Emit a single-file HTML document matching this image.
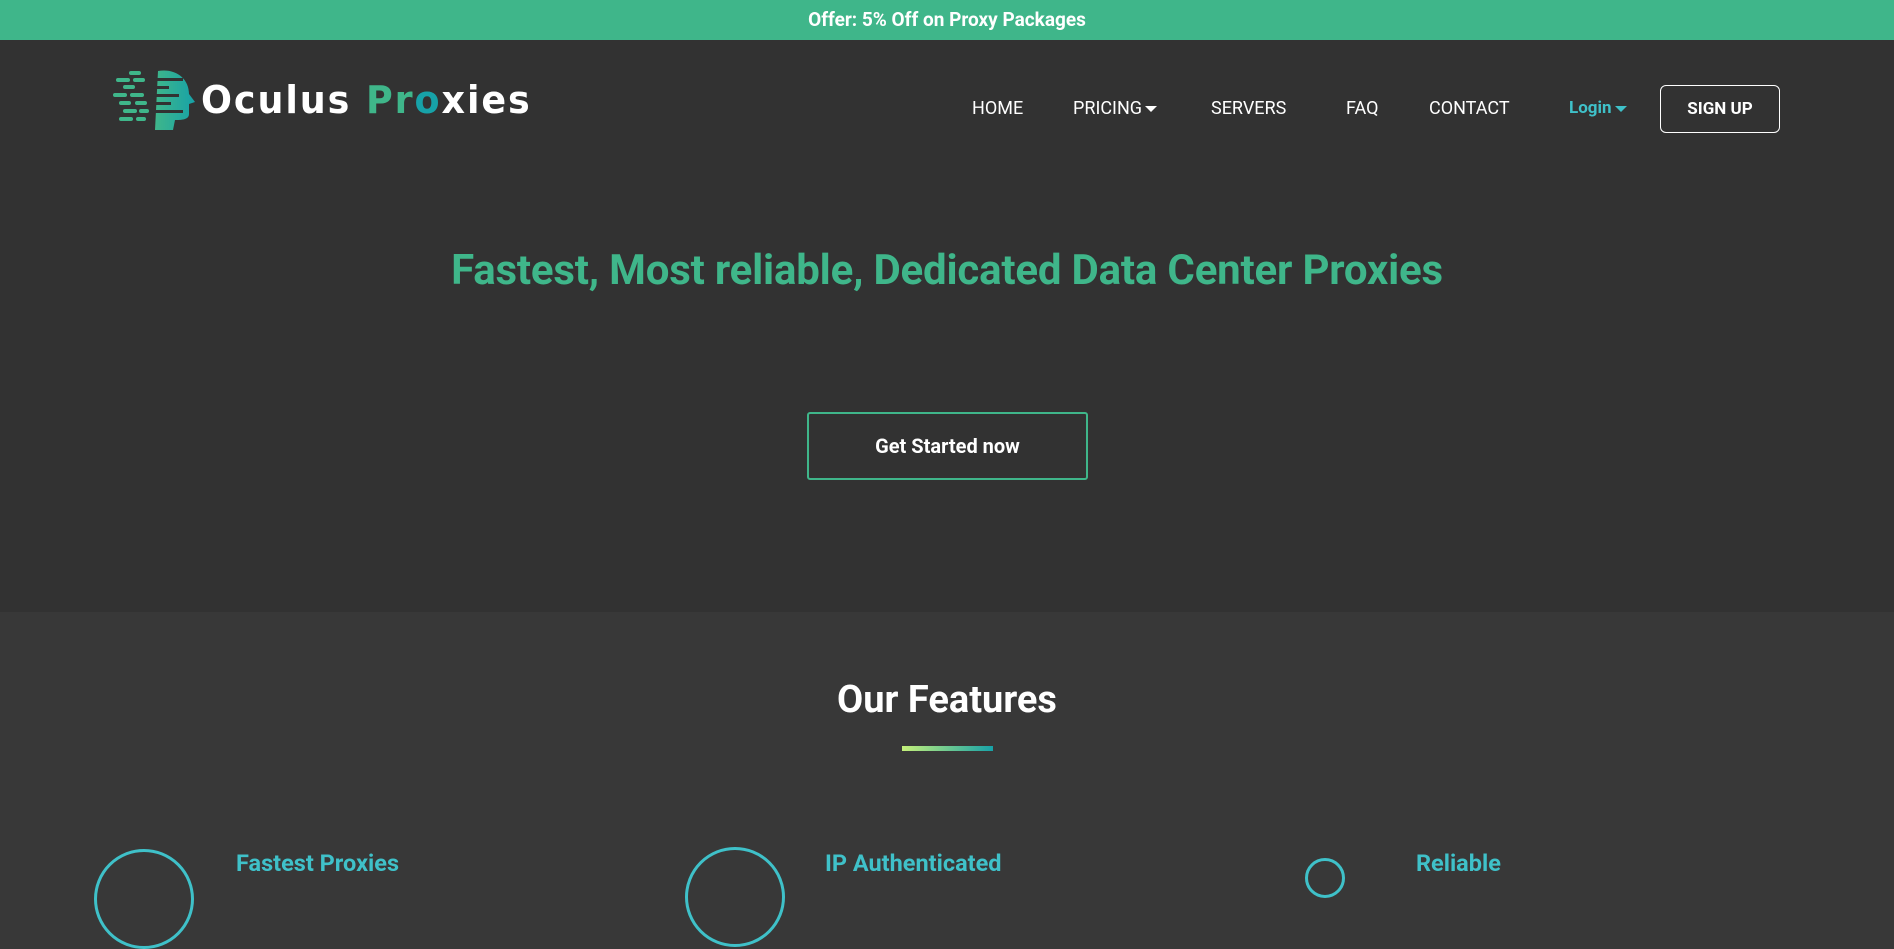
<!DOCTYPE html>
<html><head><meta charset="utf-8"><style>
*{margin:0;padding:0;box-sizing:border-box}
body{width:1894px;height:863px;overflow:hidden;background:#383838;font-family:Roboto,"Liberation Sans",sans-serif;position:relative}
.top{position:absolute;left:0;top:0;width:1894px;height:40px;background:#3fb68a;color:#fff;font-weight:bold;font-size:19px;text-align:center;line-height:40px}
.hero{position:absolute;left:0;top:40px;width:1894px;height:572px;background:#323232}
.a{position:absolute;font-size:18px;color:#fff}
.caret{display:inline-block;border-left:6px solid transparent;border-right:6px solid transparent;border-top:6px solid currentColor;vertical-align:middle;margin-left:3px}
.ab{position:absolute}
</style></head><body>
<div class="top">Offer: 5% Off on Proxy Packages</div>
<div class="hero"></div>
<svg class="ab" style="left:113px;top:68px" width="85" height="64" viewBox="0 0 85 64">
<defs><linearGradient id="g" x1="0" x2="1"><stop offset="0" stop-color="#3fb68a"/><stop offset="1" stop-color="#17a2a8"/></linearGradient></defs>
<path d="M45 3 C62 0 76 10 76 26 L82 34 L76 36 L76 46 C76 52 68 52 62 52 L60 62 L42 62 Z" fill="url(#g)"/>
<g fill="#3fb68a"><rect x="16" y="3" width="12" height="4" rx="2"/><rect x="3" y="10" width="14" height="4" rx="2"/><rect x="20" y="10" width="12" height="4" rx="2"/><rect x="10" y="17" width="12" height="4" rx="2"/><rect x="0" y="25" width="14" height="4" rx="2"/><rect x="17" y="25" width="14" height="4" rx="2"/><rect x="6" y="33" width="12" height="4" rx="2"/><rect x="22" y="33" width="12" height="4" rx="2"/><rect x="10" y="41" width="14" height="4" rx="2"/><rect x="26" y="41" width="10" height="4" rx="2"/><rect x="6" y="49" width="14" height="4" rx="2"/><rect x="23" y="49" width="10" height="4" rx="2"/></g>
<g fill="#323232"><rect x="36" y="10" width="34" height="3"/><rect x="36" y="18" width="20" height="3"/><rect x="36" y="26" width="30" height="3"/><rect x="36" y="34" width="22" height="3"/><rect x="36" y="42" width="34" height="3"/></g>
</svg>
<div class="ab" style="left:201px;top:78px;font-size:38px;color:#fff;letter-spacing:2px;font-family:'DejaVu Sans',sans-serif;font-weight:bold;transform:scaleX(0.96);transform-origin:left">Oculus <span style="color:#3fb68a">Pr</span><span style="color:#17a2a8">o</span>xies</div>
<div class="a" style="left:972px;top:98px">HOME</div>
<div class="a" style="left:1073px;top:98px">PRICING<span class="caret"></span></div>
<div class="a" style="left:1211px;top:98px">SERVERS</div>
<div class="a" style="left:1346px;top:98px">FAQ</div>
<div class="a" style="left:1429px;top:98px">CONTACT</div>
<div class="a" style="left:1569px;top:98px;color:#3fc1c9;font-weight:bold;font-size:17px">Login<span class="caret"></span></div>
<div class="ab" style="left:1660px;top:85px;width:120px;height:48px;border:1px solid #fff;border-radius:6px;color:#fff;font-weight:bold;font-size:17px;text-align:center;line-height:46px">SIGN UP</div>
<div class="ab" style="left:0;top:246px;width:1894px;text-align:center;color:#3fb68a;font-size:42px;font-weight:bold;letter-spacing:-0.2px">Fastest, Most reliable, Dedicated Data Center Proxies</div>
<div class="ab" style="left:807px;top:412px;width:281px;height:68px;border:2px solid #3fb68a;border-radius:3px;color:#fff;font-weight:bold;font-size:20px;text-align:center;line-height:64px">Get Started now</div>
<div class="ab" style="left:0;top:678px;width:1894px;text-align:center;color:#fff;font-size:38px;font-weight:bold">Our Features</div>
<div class="ab" style="left:902px;top:746px;width:91px;height:5px;background:linear-gradient(90deg,#c5f07a,#17a2a8)"></div>
<div class="ab" style="left:94px;top:849px;width:100px;height:100px;border:3px solid #3fc1c9;border-radius:50%"></div>
<div class="ab" style="left:685px;top:847px;width:100px;height:100px;border:3px solid #3fc1c9;border-radius:50%"></div>
<div class="ab" style="left:1305px;top:858px;width:40px;height:40px;border:3px solid #3fc1c9;border-radius:50%"></div>
<div class="ab" style="left:236px;top:849px;color:#3fc1c9;font-size:23.5px;font-weight:bold">Fastest Proxies</div>
<div class="ab" style="left:825px;top:849px;color:#3fc1c9;font-size:23.5px;font-weight:bold">IP Authenticated</div>
<div class="ab" style="left:1416px;top:849px;color:#3fc1c9;font-size:23.5px;font-weight:bold">Reliable</div>
</body></html>
